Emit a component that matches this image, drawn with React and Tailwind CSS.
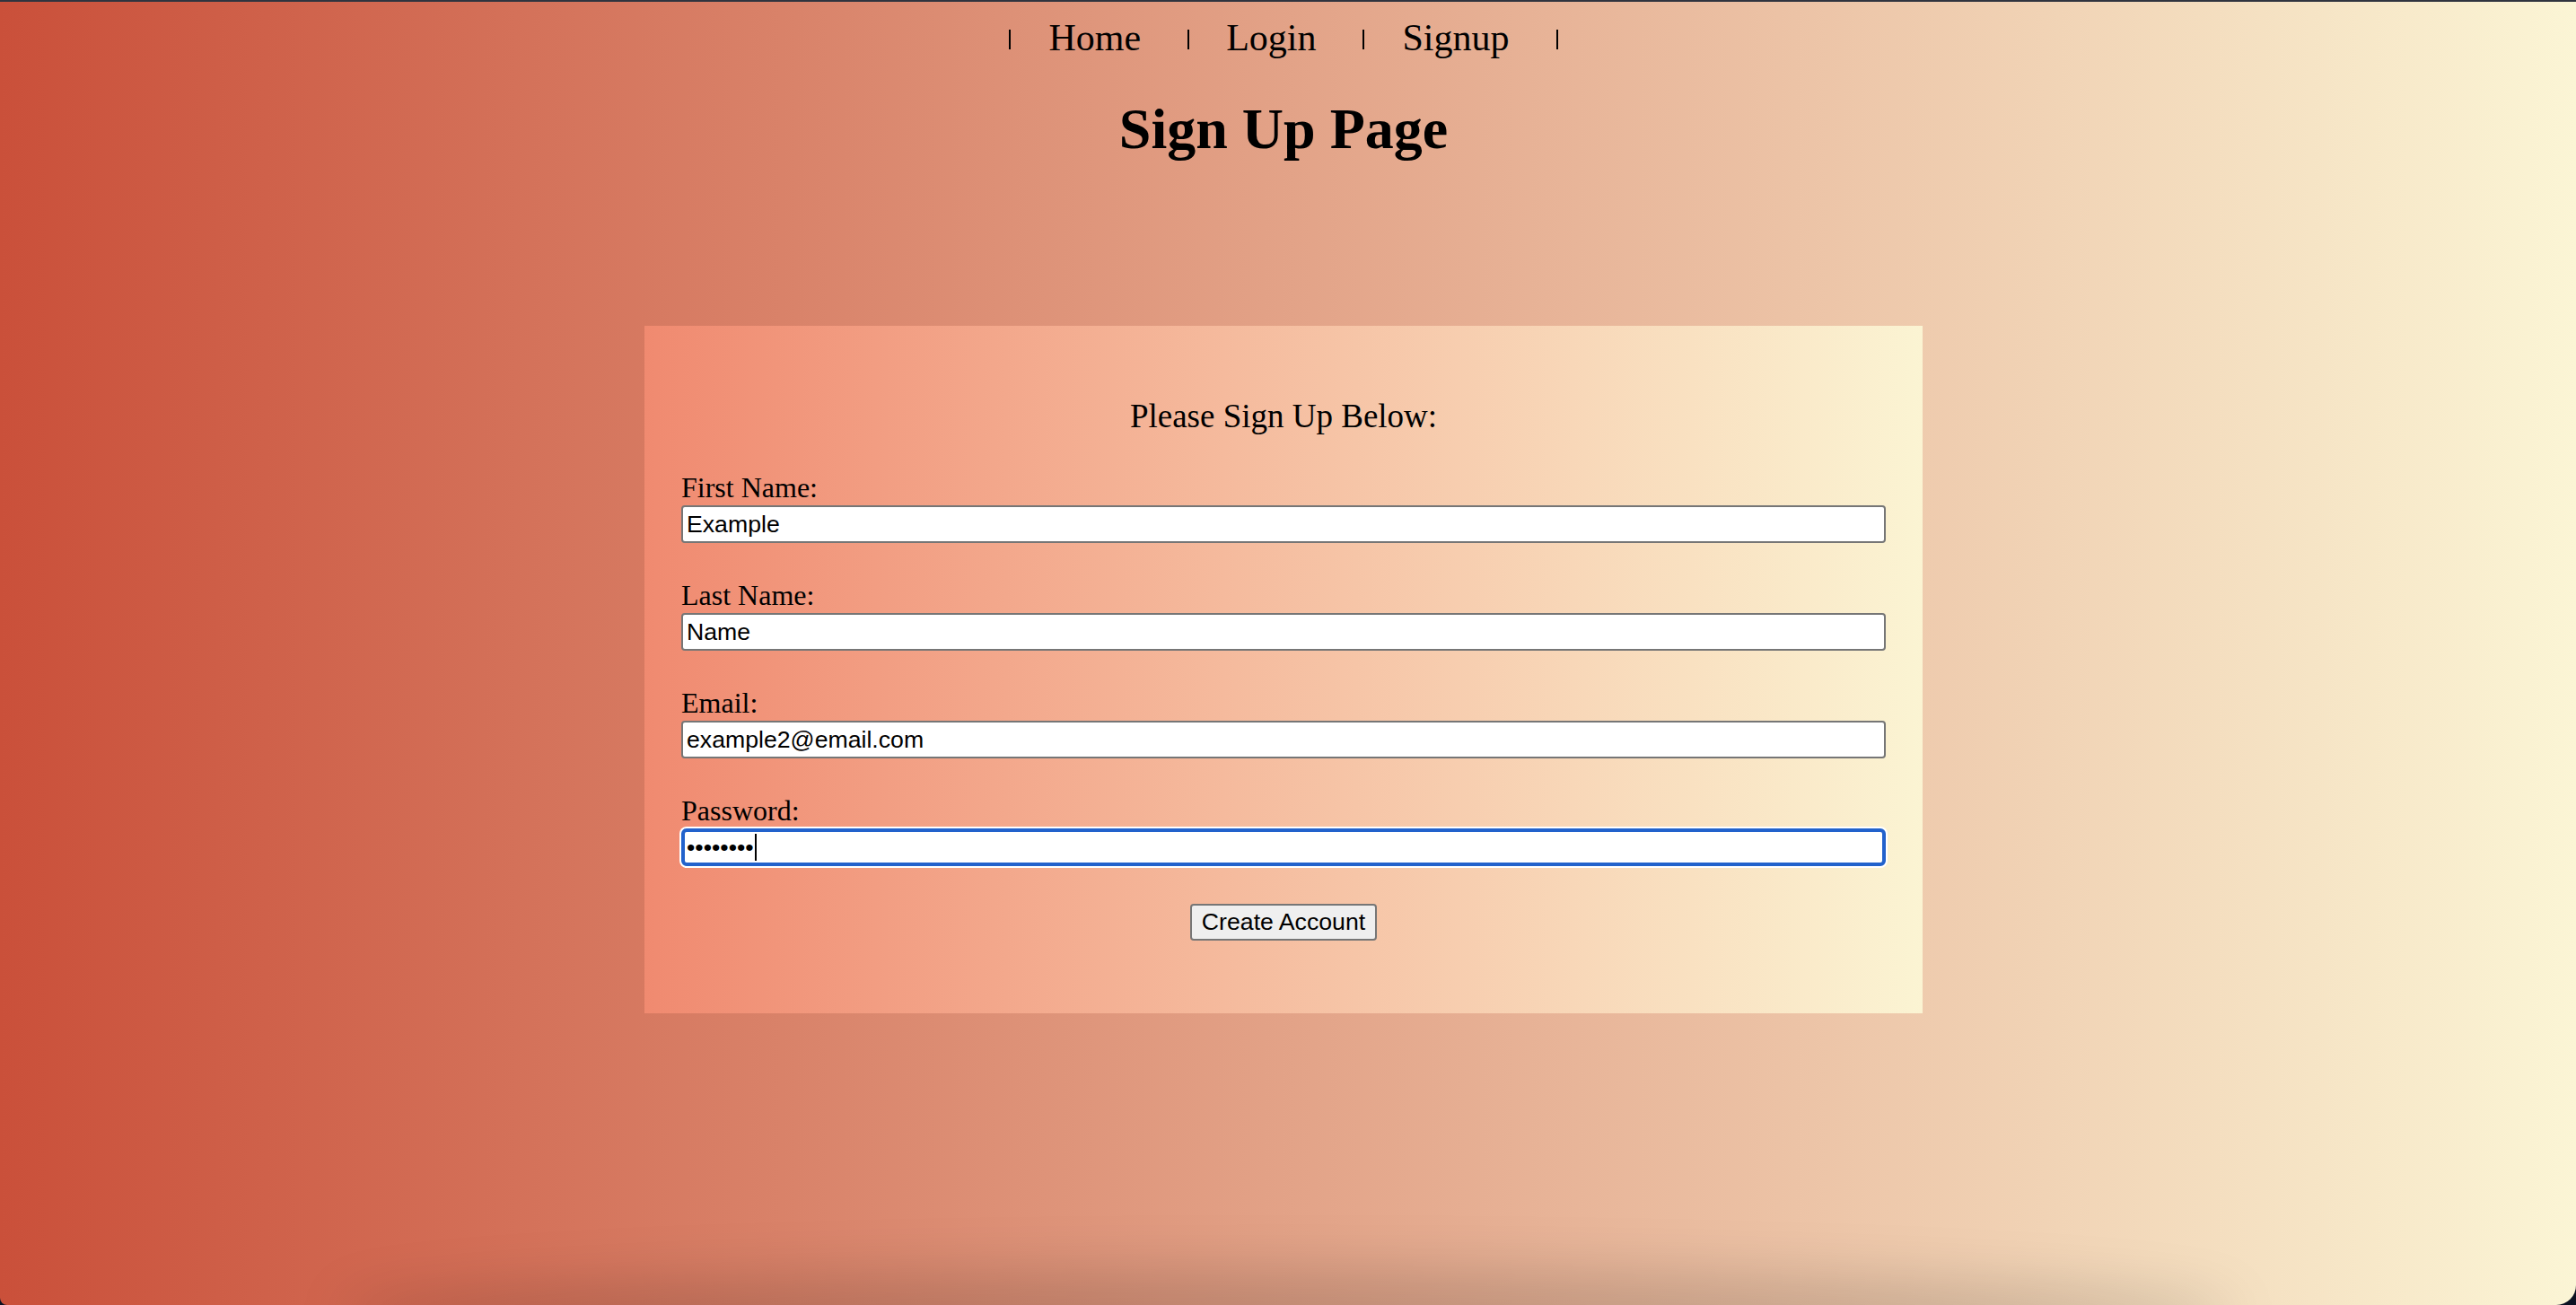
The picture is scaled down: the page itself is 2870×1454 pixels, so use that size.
export default function App() {
  const fields = [
    { label: "First Name:", value: "Example" },
    { label: "Last Name:", value: "Name" },
    { label: "Email:", value: "example2@email.com" },
  ];
  const pipe = "inline-block h-[22px] w-[2px] bg-black mt-[4px]";
  const inputBase =
    "block w-full h-[42px] bg-white font-['Liberation_Sans',Arial,sans-serif] text-[26.67px] text-black outline-none";
  return (
    <div className="min-h-screen bg-[#0c1222]">
      <div className="relative h-[1454px] overflow-hidden rounded-bl-[8px] rounded-br-[22px] border-t-2 border-[#30343f] bg-[linear-gradient(to_right,#ca503a,#fbf5d5)] pr-[10px] font-['Liberation_Serif','Times_New_Roman',serif] text-black">
        <nav className="flex items-center justify-center pt-[17px] text-[42px] leading-[46px]">
          <span className={pipe} />
          <a href="#" className="ml-[42px] text-black no-underline">Home</a>
          <span className={pipe + " ml-[52px]"} />
          <a href="#" className="ml-[41px] text-black no-underline">Login</a>
          <span className={pipe + " ml-[52px]"} />
          <a href="#" className="ml-[42px] text-black no-underline">Signup</a>
          <span className={pipe + " ml-[52px]"} />
        </nav>

        <h1 className="mt-[43px] text-center text-[64px] font-bold leading-[71px]">Sign Up Page</h1>

        <form className="mx-auto mt-[184px] w-[1424px] bg-[linear-gradient(to_right,#f08a70,#fbf4d3)] px-[41px] pt-[80px] pb-[81px]">
          <h3 className="text-center text-[37px] font-normal leading-[42px]">Please Sign Up Below:</h3>
          <div className="mt-[40px] flex flex-col gap-[40px]">
            {fields.map((f) => (
              <div key={f.label} className="flex flex-col">
                <label className="block text-[32px] leading-[37px]">{f.label}</label>
                <input
                  type="text"
                  readOnly
                  value={f.value}
                  className={inputBase + " mt-[1px] rounded-[4px] border-2 border-[#767676] px-[4px]"}
                />
              </div>
            ))}
            <div className="flex flex-col">
              <label className="block text-[32px] leading-[37px]">Password:</label>
              <div className="relative mt-[1px]">
                <input
                  type="text"
                  readOnly
                  value="••••••••"
                  className={inputBase + " rounded-[6px] border-[4px] border-[#2262cc] px-[2px] shadow-[0_0_0_2px_#ffffff]"}
                />
                <span className="pointer-events-none absolute left-[82px] top-[6px] h-[30px] w-[2px] bg-black" />
              </div>
            </div>
          </div>
          <div className="mt-[42px] flex justify-center">
            <button
              type="button"
              className="h-[41px] rounded-[4px] border-2 border-[#767676] bg-[#efefef] px-[11px] font-['Liberation_Sans',Arial,sans-serif] text-[26.67px] leading-none text-black"
            >
              Create Account
            </button>
          </div>
        </form>

        <div className="pointer-events-none absolute bottom-[-60px] left-[380px] right-[380px] h-[100px] rounded-[50%] bg-black/15 blur-[30px]" />
      </div>
    </div>
  );
}
